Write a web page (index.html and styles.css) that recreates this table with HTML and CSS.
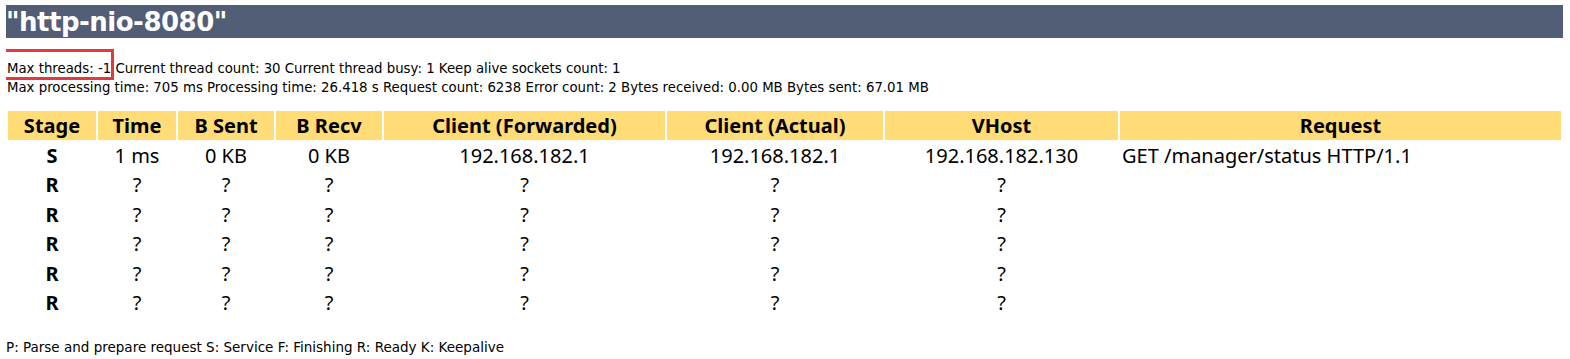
FILE: index.html
```html
<!DOCTYPE html>
<html>
<head>
<meta charset="utf-8">
<link rel="stylesheet" href="styles.css">
</head>
<body>
<h1 class="title">"http-nio-8080"</h1>
<p class="stats"><span class="mark">Max threads: -1</span> Current thread count: 30 Current thread busy: 1 Keep alive sockets count: 1<br>Max processing time: 705 ms Processing time: 26.418 s Request count: 6238 Error count: 2 Bytes received: 0.00 MB Bytes sent: 67.01 MB</p>
<table class="grid">
<colgroup>
<col class="c1"><col class="c2"><col class="c3"><col class="c4"><col class="c5"><col class="c6"><col class="c7"><col class="c8">
</colgroup>
<thead>
<tr><th>Stage</th><th>Time</th><th>B Sent</th><th>B Recv</th><th>Client (Forwarded)</th><th>Client (Actual)</th><th>VHost</th><th>Request</th></tr>
</thead>
<tbody>
<tr><td class="st">S</td><td>1 ms</td><td>0 KB</td><td>0 KB</td><td>192.168.182.1</td><td>192.168.182.1</td><td>192.168.182.130</td><td class="req">GET /manager/status HTTP/1.1</td></tr>
<tr><td class="st">R</td><td>?</td><td>?</td><td>?</td><td>?</td><td>?</td><td>?</td><td class="req"></td></tr>
<tr><td class="st">R</td><td>?</td><td>?</td><td>?</td><td>?</td><td>?</td><td>?</td><td class="req"></td></tr>
<tr><td class="st">R</td><td>?</td><td>?</td><td>?</td><td>?</td><td>?</td><td>?</td><td class="req"></td></tr>
<tr><td class="st">R</td><td>?</td><td>?</td><td>?</td><td>?</td><td>?</td><td>?</td><td class="req"></td></tr>
<tr><td class="st">R</td><td>?</td><td>?</td><td>?</td><td>?</td><td>?</td><td>?</td><td class="req"></td></tr>
</tbody>
</table>
<p class="legend">P: Parse and prepare request S: Service F: Finishing R: Ready K: Keepalive</p>
</body>
</html>
```

FILE: styles.css
```css
html, body {
  background: #ffffff;
}
body {
  margin: 5px 7px 0 6px;
  font-family: "DejaVu Sans", sans-serif;
  color: #000000;
}
.title {
  margin: 0;
  height: 33px;
  line-height: 34px;
  background: #525d76;
  color: #ffffff;
  font-family: "DejaVu Sans", sans-serif;
  font-weight: bold;
  font-size: 26px;
  letter-spacing: -0.5px;
}
.stats {
  margin: 21px 0 0 1px;
  font-size: 13.3px;
  line-height: 19px;
}
.mark {
  position: relative;
}
.mark::after {
  content: "";
  position: absolute;
  left: -7px;
  right: -3px;
  top: -12px;
  bottom: -4px;
  border: 3px solid #e03a3e;
}
.grid {
  margin-top: 12px;
  width: 100%;
  border-collapse: separate;
  border-spacing: 2px;
  font-family: "Noto Sans", "Open Sans", sans-serif;
  font-size: 20px;
  table-layout: fixed;
}
.c1 { width: 88px; }
.c2 { width: 78px; }
.c3 { width: 96px; }
.c4 { width: 106px; }
.c5 { width: 281px; }
.c6 { width: 216px; }
.c7 { width: 233px; }
.c8 { width: auto; }
.grid th {
  background: #ffdc75;
  height: 29px;
  line-height: 29px;
  padding: 0;
  font-weight: bold;
  font-size: 20px;
}
.grid td {
  height: 27.4px;
  line-height: 27.4px;
  padding: 0;
  text-align: center;
}
.grid td.st {
  font-weight: bold;
}
.grid td.req {
  text-align: left;
  padding-left: 2px;
}
.legend {
  margin: 21px 0 0 0;
  font-size: 13.5px;
}
```
